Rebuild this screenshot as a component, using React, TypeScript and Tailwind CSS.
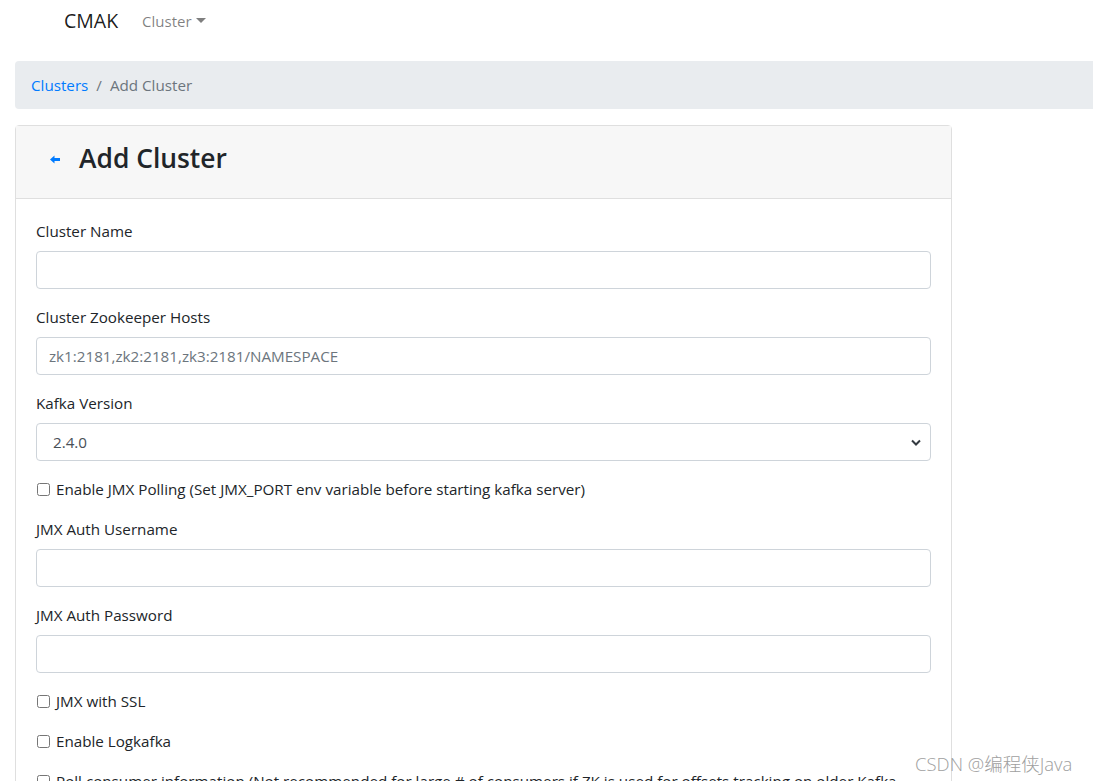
import React from "react";

const FONT = { fontFamily: '"Segoe UI", "Open Sans", "Noto Sans CJK SC", sans-serif' };

function TextField({ label, placeholder }: { label: string; placeholder?: string }) {
  return (
    <div className="mb-4">
      <label className="mb-2 block leading-6">{label}</label>
      <input
        type="text"
        placeholder={placeholder}
        className="block h-[38px] w-full rounded border border-[#ced4da] bg-white px-3 text-[#495057] placeholder:text-[#6c757d]"
      />
    </div>
  );
}

function CheckRow({ label }: { label: string }) {
  return (
    <div className="mb-4 flex h-6 items-center">
      <input type="checkbox" className="ml-px mr-[5px] h-[13px] w-[13px] shrink-0" />
      <span className="ml-px whitespace-nowrap leading-6">{label}</span>
    </div>
  );
}

export default function App() {
  return (
    <div className="relative min-h-[781px] overflow-hidden bg-white text-[15.2px] text-[#212529]" style={FONT}>
      <nav className="flex h-[42px] items-center pl-16">
        <span className="text-[19.5px] text-[rgba(0,0,0,0.9)]">CMAK</span>
        <span className="ml-6 flex items-center text-[15px] text-[rgba(0,0,0,0.5)]">
          Cluster
          <svg width="10" height="6" viewBox="0 0 10 6" className="ml-1">
            <path d="M0 0 L10 0 L5 5 Z" fill="currentColor" />
          </svg>
        </span>
      </nav>

      <div className="ml-[15px] mt-[19px] flex h-[48px] items-center rounded-l bg-[#e9ecef] px-4">
        <a className="text-[#007bff]">Clusters</a>
        <span className="px-2 text-[#6c757d]">/</span>
        <span className="text-[#6c757d]">Add Cluster</span>
      </div>

      <div className="ml-[15px] mt-[16px] w-[937px] rounded border border-[#dfdfdf]">
        <div className="flex h-[73px] items-center border-b border-[#dfdfdf] bg-[#f7f7f7] pb-2 pl-[34px]">
          <svg width="10" height="9" viewBox="0 0 10 9" className="mt-[2px]">
            <path d="M0 4.5 L4.5 0.5 L4.5 3 L10 3 L10 6 L4.5 6 L4.5 8.5 Z" fill="#007bff" />
          </svg>
          <h3 className="ml-[19px] text-[26.4px] font-semibold leading-none">Add Cluster</h3>
        </div>
        <div className="px-5 pt-5">
          <TextField label="Cluster Name" />
          <TextField label="Cluster Zookeeper Hosts" placeholder="zk1:2181,zk2:2181,zk3:2181/NAMESPACE" />
          <div className="mb-4">
            <label className="mb-2 block leading-6">Kafka Version</label>
            <div className="relative flex h-[38px] w-full items-center rounded border border-[#ced4da] bg-white pl-4 text-[#495057]">
              <span>2.4.0</span>
              <svg width="10" height="7" viewBox="0 0 10 7" className="absolute right-[9px] top-[15px]">
                <path d="M1 1.5 L5 5.5 L9 1.5" stroke="#343a40" strokeWidth="2" fill="none" />
              </svg>
            </div>
          </div>
          <CheckRow label="Enable JMX Polling (Set JMX_PORT env variable before starting kafka server)" />
          <TextField label="JMX Auth Username" />
          <TextField label="JMX Auth Password" />
          <CheckRow label="JMX with SSL" />
          <CheckRow label="Enable Logkafka" />
          <CheckRow label="Poll consumer information (Not recommended for large # of consumers if ZK is used for offsets tracking on older Kafka" />
        </div>
      </div>

      <div className="absolute left-[915px] top-[750px] text-[18.5px] font-light text-[#a0a0a0]">CSDN @编程侠Java</div>
    </div>
  );
}
